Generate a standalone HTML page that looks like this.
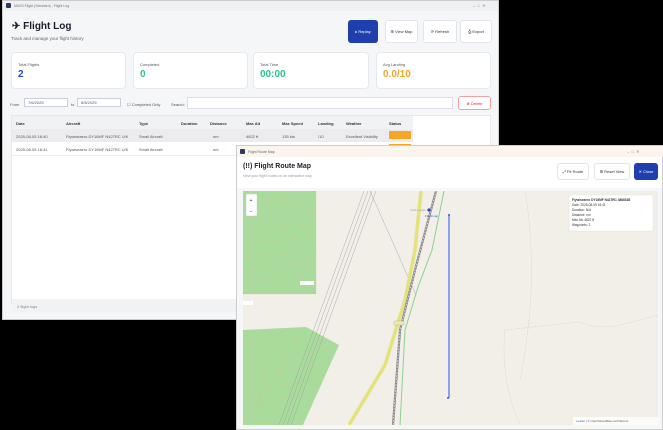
<!DOCTYPE html>
<html><head><meta charset="utf-8"><style>
*{margin:0;padding:0;box-sizing:border-box}
body{width:663px;height:430px;background:#000;position:relative;overflow:hidden;font-family:"Liberation Sans",sans-serif;color:#222}
.a{position:absolute}
.card{position:absolute;background:#fff;border:1px solid #e6e8ec;border-radius:4px}
.t{position:absolute;font-size:4px;color:#555;white-space:nowrap}
.btn{position:absolute;background:#fff;border:1px solid #e3e5ea;border-radius:3px;font-size:4px;color:#333;display:flex;align-items:center;justify-content:center}
</style></head><body>
<div class="a" style="left:2px;top:0;width:497px;height:320px;background:#f5f6f8;border:1px solid #ccc">
 <div class="a" style="left:0;top:0;width:495px;height:10px;background:#eef0f3"></div>
 <div class="a" style="left:3px;top:2px;width:5px;height:5px;background:#2a3b5c;border-radius:1px"></div>
 <div class="t" style="left:11px;top:3px;font-size:3.5px;color:#777">MAVS Flight (Standard) - Flight Log</div>
 <div class="t" style="left:470px;top:2px;color:#888">–&nbsp;&nbsp;□&nbsp;&nbsp;✕</div>
 <div class="t" style="left:9px;top:20px;font-size:10px;font-weight:bold;color:#1b1f2a">✈ Flight Log</div>
 <div class="t" style="left:8px;top:35px;font-size:4.5px;color:#666">Track and manage your flight history</div>
 <div class="btn" style="left:345px;top:19px;width:30px;height:23px;background:#1f3fae;color:#fff;border-color:#1f3fae">▸ Replay</div>
 <div class="btn" style="left:382px;top:19px;width:33px;height:23px">⊞ View Map</div>
 <div class="btn" style="left:420px;top:19px;width:34px;height:23px">⟳ Refresh</div>
 <div class="btn" style="left:457px;top:19px;width:32px;height:23px">⎙ Export</div>
 <div class="card" style="left:8px;top:51px;width:115px;height:37px"><div class="t" style="left:6px;top:9px">Total Flights</div><div class="t" style="left:6px;top:16px;font-size:10px;font-weight:bold;color:#2a48c0">2</div></div>
 <div class="card" style="left:130px;top:51px;width:115px;height:37px"><div class="t" style="left:6px;top:9px">Completed</div><div class="t" style="left:6px;top:16px;font-size:10px;font-weight:bold;color:#2cc38a">0</div></div>
 <div class="card" style="left:250px;top:51px;width:116px;height:37px"><div class="t" style="left:6px;top:9px">Total Time</div><div class="t" style="left:6px;top:16px;font-size:10px;font-weight:bold;color:#2cc38a">00:00</div></div>
 <div class="card" style="left:373px;top:51px;width:115px;height:37px"><div class="t" style="left:6px;top:9px">Avg Landing</div><div class="t" style="left:6px;top:16px;font-size:10px;font-weight:bold;color:#f4a62a">0.0/10</div></div>
 <div class="t" style="left:7px;top:101px">From</div>
 <div class="a" style="left:21px;top:97px;width:44px;height:9px;background:#fff;border:1px solid #ccd"></div>
 <div class="t" style="left:25px;top:99px">7/6/2025</div>
 <div class="t" style="left:68px;top:101px">to</div>
 <div class="a" style="left:74px;top:97px;width:44px;height:9px;background:#fff;border:1px solid #ccd"></div>
 <div class="t" style="left:78px;top:99px">8/5/2025</div>
 <div class="t" style="left:124px;top:101px">☐ Completed Only</div>
 <div class="t" style="left:168px;top:101px">Search:</div>
 <div class="a" style="left:184px;top:96px;width:266px;height:12px;background:#fff;border:1px solid #dde"></div>
 <div class="btn" style="left:455px;top:95px;width:33px;height:14px;border-color:#f0a0a0;color:#d33">⊗ Delete</div>
 <div class="a" style="left:8px;top:114px;width:480px;height:190px;background:#fff;border:1px solid #e6e8ec"></div>
 <div class="a" style="left:9px;top:115px;width:478px;height:13px;background:#f1f2f4"></div>
 <div class="a" style="left:9px;top:128px;width:478px;height:13px;background:#ececee"></div>
 <div class="a" style="left:9px;top:154px;width:478px;height:1px;background:#eee"></div>
 <div class="t" style="left:13px;top:120px;font-weight:bold;color:#333">Date</div>
 <div class="t" style="left:63px;top:120px;font-weight:bold;color:#333">Aircraft</div>
 <div class="t" style="left:136px;top:120px;font-weight:bold;color:#333">Type</div>
 <div class="t" style="left:178px;top:120px;font-weight:bold;color:#333">Duration</div>
 <div class="t" style="left:207px;top:120px;font-weight:bold;color:#333">Distance</div>
 <div class="t" style="left:243px;top:120px;font-weight:bold;color:#333">Max Alt</div>
 <div class="t" style="left:279px;top:120px;font-weight:bold;color:#333">Max Speed</div>
 <div class="t" style="left:315px;top:120px;font-weight:bold;color:#333">Landing</div>
 <div class="t" style="left:343px;top:120px;font-weight:bold;color:#333">Weather</div>
 <div class="t" style="left:386px;top:120px;font-weight:bold;color:#333">Status</div>
 <div class="a" style="left:410px;top:115px;width:77px;height:13px;background:#fff"></div>
 <div class="t" style="left:13px;top:133px">2025-08-05 16:40</div>
 <div class="t" style="left:63px;top:133px">Flywiseaero DY16MF N427RC U/K</div>
 <div class="t" style="left:136px;top:133px">Small Aircraft</div>
 <div class="t" style="left:210px;top:133px">nm</div>
 <div class="t" style="left:243px;top:133px">4822 ft</div>
 <div class="t" style="left:279px;top:133px">135 kts</div>
 <div class="t" style="left:315px;top:133px">/10</div>
 <div class="t" style="left:343px;top:133px">Excellent Visibility</div>
 <div class="a" style="left:386px;top:130px;width:22px;height:8px;background:#f5a623"></div>
 <div class="a" style="left:410px;top:128px;width:77px;height:13px;background:#fff"></div>
 <div class="t" style="left:13px;top:146px">2025-08-05 16:41</div>
 <div class="t" style="left:63px;top:146px">Flywiseaero DY16MF N427RC U/K</div>
 <div class="t" style="left:136px;top:146px">Small Aircraft</div>
 <div class="t" style="left:210px;top:146px">nm</div>
 <div class="a" style="left:386px;top:143px;width:22px;height:3px;background:#f5a623"></div>
 <div class="a" style="left:9px;top:298px;width:478px;height:13px;background:#f1f2f4"></div>
 <div class="t" style="left:14px;top:303px;color:#888">2 flight logs</div>
</div>
<div class="a" style="left:236px;top:145px;width:427px;height:285px;background:#fff;border:1px solid #ccc">
 <div class="a" style="left:0;top:0;width:427px;height:11px;background:#fbf5ee"></div>
 <div class="a" style="left:3px;top:3px;width:5px;height:5px;background:#2a3b5c;border-radius:1px"></div>
 <div class="t" style="left:11px;top:4px;font-size:3.5px;color:#666">Flight Route Map</div>
 <div class="t" style="left:390px;top:3px;color:#888">–&nbsp;&nbsp;□&nbsp;&nbsp;✕</div>
 <div class="t" style="left:6px;top:17px;font-size:7px;font-weight:bold;color:#1b1f2a">(!!) Flight Route Map</div>
 <div class="t" style="left:6px;top:28px;font-size:3.5px;color:#999">View your flight routes on an interactive map</div>
 <div class="btn" style="left:320px;top:17px;width:32px;height:17px">⤢ Fit Route</div>
 <div class="btn" style="left:357px;top:17px;width:36px;height:17px">⊞ Reset View</div>
 <div class="btn" style="left:397px;top:17px;width:24px;height:17px;background:#1f3fae;color:#fff;border-color:#1f3fae">✕ Close</div>
 <div class="a" style="left:0;top:42px;width:425px;height:241px;background:#f6f7f9"></div>
</div>
<svg class="a" style="left:243px;top:191px" width="415" height="234" viewBox="243 191 415 234">
 <rect x="243" y="191" width="415" height="234" fill="#f2efe9"/>
 <rect x="243" y="191" width="73" height="103" fill="#add ca0" style="fill:#a9dc9c"/>
 <polygon points="243,330 306,327 339,345 303,425 243,425" fill="#a9dc9c"/>
 <g stroke="#d8b890" stroke-width="0.5" stroke-dasharray="1.5,1.2" fill="none" opacity="0.8">
  <path d="M243,205 L316,197 M243,218 L316,210 M243,231 L316,223 M243,244 L316,236 M243,257 L316,249 M243,270 L316,262 M243,283 L316,275 M316,191 L316,294 M243,294 L316,294"/>
  <path d="M243,345 L320,338 M243,360 L328,350 M243,375 L325,365 M243,390 L318,380 M243,405 L311,395 M260,330 L260,425 M280,328 L280,425 M243,425 L306,327"/>
  <path d="M525,191 Q540,280 520,380 M580,322 Q600,330 620,325 Q640,320 658,315 M505,330 L580,322 M505,330 Q500,380 520,425"/>
 </g>
 <rect x="243" y="301" width="10" height="4" fill="#fff"/>
 <rect x="300" y="281" width="14" height="4" fill="#fff"/>
 <g stroke="#999" stroke-width="0.4" fill="none">
  <path d="M364,191 L279,425 M368,191 L283,425 M372,191 L287,425 M376,191 L291,425"/>
  <path d="M370,191 L416,295"/>
 </g>
 <path d="M421,191 L415,250 L405,300 L385,365 L349,425" stroke="#e4e27a" stroke-width="3.5" fill="none"/>
 <path d="M436,191 L415,270 L400,330 L393,425" stroke="#888" stroke-width="2.2" fill="none"/>
 <path d="M436,191 L415,270 L400,330 L393,425" stroke="#eee" stroke-width="0.8" stroke-dasharray="1.5,1.5" fill="none"/>
 <path d="M444,191 L432,250 L418,287 L405,330 L400,425" stroke="#8fcf8f" stroke-width="1" fill="none"/>
 <rect x="394" y="321" width="10" height="4" fill="#f0eab0" stroke="#999" stroke-width="0.3"/>
 <circle cx="429" cy="210" r="1.6" fill="#2a48c0"/>
 <text x="410" y="211" font-size="3" fill="#999" font-family="Liberation Sans">Crab Lodge</text>
 <text x="425" y="217" font-size="3" fill="#36c" font-family="Liberation Sans">Flightmap</text>
 <path d="M449,215 L449,398" stroke="#6f8ee8" stroke-width="1.6"/>
 <circle cx="449" cy="215" r="1" fill="#3a5ad0"/><circle cx="448" cy="398" r="1" fill="#3a5ad0"/>
 <rect x="246" y="194" width="11" height="22" fill="#fff" stroke="#ccc" stroke-width="0.5" rx="1"/>
 <text x="249.5" y="202" font-size="5" fill="#333">+</text><text x="249.5" y="213" font-size="5" fill="#333">−</text>
 <rect x="569" y="195" width="84" height="36" fill="#fff" rx="1.5" stroke="#ddd" stroke-width="0.4"/>
 <g font-family="Liberation Sans" font-size="3.2" fill="#333">
  <text x="572" y="201" font-weight="bold">Flywiseaero DY16MF N427RC 4868338</text>
  <text x="572" y="206">Date: 2025-08-05 16:41</text>
  <text x="572" y="211">Duration: N/A</text>
  <text x="572" y="216">Distance: nm</text>
  <text x="572" y="221">Max Alt: 4822 ft</text>
  <text x="572" y="226">Waypoints: 2</text>
 </g>
 <rect x="573" y="417" width="85" height="8" fill="#fff" opacity="0.8"/>
 <text x="576" y="422" font-size="3" fill="#555" font-family="Liberation Sans"><tspan fill="#2a7ad0">Leaflet</tspan> | © OpenStreetMap contributors</text>
</svg>
</body></html>
